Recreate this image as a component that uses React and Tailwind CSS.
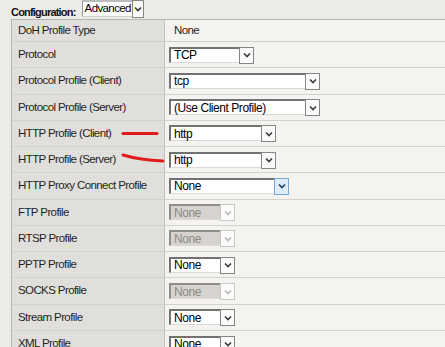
import React from "react";

function Chevron({ color = "#333" }) {
  return (
    <svg width="8" height="6" viewBox="0 0 8 6">
      <path d="M1 1.5 L4 4.5 L7 1.5" fill="none" stroke={color} strokeWidth="1.6" />
    </svg>
  );
}

function Select({ value, width, disabled, hover }) {
  return (
    <div
      className={
        "relative flex h-[16px] items-center border-t-2 border-l-2 border-r border-b " +
        (disabled
          ? "border-t-[#8f8d89] border-l-[#8f8d89] border-r-[#dcdad6] border-b-[#dcdad6] bg-[#d6d3ce] text-[#8c8a86]"
          : "border-t-[#727272] border-l-[#727272] border-r-[#d9d9d9] border-b-[#d9d9d9] bg-white text-black")
      }
      style={{ width }}
    >
      <span className="whitespace-nowrap pl-[3px] text-[12px] leading-none tracking-[-0.45px]">{value}</span>
      <div
        className={
          "absolute right-[-1px] top-[-2px] flex h-[17px] w-[15px] items-center justify-center border " +
          (disabled
            ? "border-[#c9c7c3] bg-[#fbfbfb]"
            : hover
            ? "border-[#7aa7cf] bg-[#dcecf8]"
            : "border-[#858585] bg-[#fafafa]")
        }
      >
        <Chevron color={disabled ? "#b9b9b9" : hover ? "#1f3f5f" : "#3a3a3a"} />
      </div>
    </div>
  );
}

const rows = [
  { label: "Protocol", value: "TCP", w: 85 },
  { label: "Protocol Profile (Client)", value: "tcp", w: 151 },
  { label: "Protocol Profile (Server)", value: "(Use Client Profile)", w: 151 },
  { label: "HTTP Profile (Client)", value: "http", w: 107 },
  { label: "HTTP Profile (Server)", value: "http", w: 107 },
  { label: "HTTP Proxy Connect Profile", value: "None", w: 120, hover: true },
  { label: "FTP Profile", value: "None", w: 66, disabled: true },
  { label: "RTSP Profile", value: "None", w: 66, disabled: true },
  { label: "PPTP Profile", value: "None", w: 66 },
  { label: "SOCKS Profile", value: "None", w: 66, disabled: true },
  { label: "Stream Profile", value: "None", w: 66 },
  { label: "XML Profile", value: "None", w: 66 },
];

export default function App() {
  return (
    <div
      className="relative h-[347px] w-[445px] overflow-hidden bg-[#ecebe7] text-[11.5px] tracking-[-0.6px] text-[#1f1f1f]"
      style={{ fontFamily: '"Liberation Sans", Arial, sans-serif' }}
    >
      <div className="flex h-[19px] items-start pl-[11px]">
        <span className="mt-[4px] whitespace-nowrap text-[11px] font-bold tracking-[-0.8px] text-[#111]">Configuration:</span>
        <div className="ml-[6px]">
          <div className="relative flex h-[17px] w-[62px] items-center overflow-visible border-t-2 border-l border-b border-r border-t-[#bcbcbc] border-l-[#9a9a9a] border-b-[#d0d0d0] border-r-[#d0d0d0] bg-white">
            <span className="whitespace-nowrap pl-[2px] text-[11.5px] leading-none tracking-[-0.6px] text-black">Advanced</span>
            <div className="absolute right-[-1px] top-[-2px] flex h-[18px] w-[12px] items-center justify-center border border-[#858585] bg-[#fafafa]">
              <Chevron />
            </div>
          </div>
        </div>
      </div>

      <div className="ml-[11px] w-[460px] border-t border-l border-[#b7b5b0]">
        <div className="grid h-[22px] grid-cols-[153px_1fr] border-b border-[#d0cec9]">
          <div className="flex items-center whitespace-nowrap border-r border-[#c4c2bd] bg-[#e1dfdb] pl-[6px]">DoH Profile Type</div>
          <div className="flex items-center bg-[#f4f3f0] pl-[9px]">None</div>
        </div>
        {rows.map((r) => (
          <div key={r.label} className="grid h-[26.27px] grid-cols-[153px_1fr] border-b border-[#d4d2cd]">
            <div className="flex items-center whitespace-nowrap border-r border-[#c4c2bd] bg-[#e1dfdb] pl-[6px]">{r.label}</div>
            <div className="flex items-center bg-[#f4f3f0] pl-[4px]">
              <Select value={r.value} width={r.w} disabled={r.disabled} hover={r.hover} />
            </div>
          </div>
        ))}
      </div>

      <svg className="pointer-events-none absolute left-0 top-0" width="445" height="347">
        <path d="M123 133.5 L157 133.5" stroke="#e01b1b" strokeWidth="3" strokeLinecap="round" fill="none" />
        <path d="M123 155 Q140 160 163 161" stroke="#e01b1b" strokeWidth="3" strokeLinecap="round" fill="none" />
      </svg>
    </div>
  );
}
